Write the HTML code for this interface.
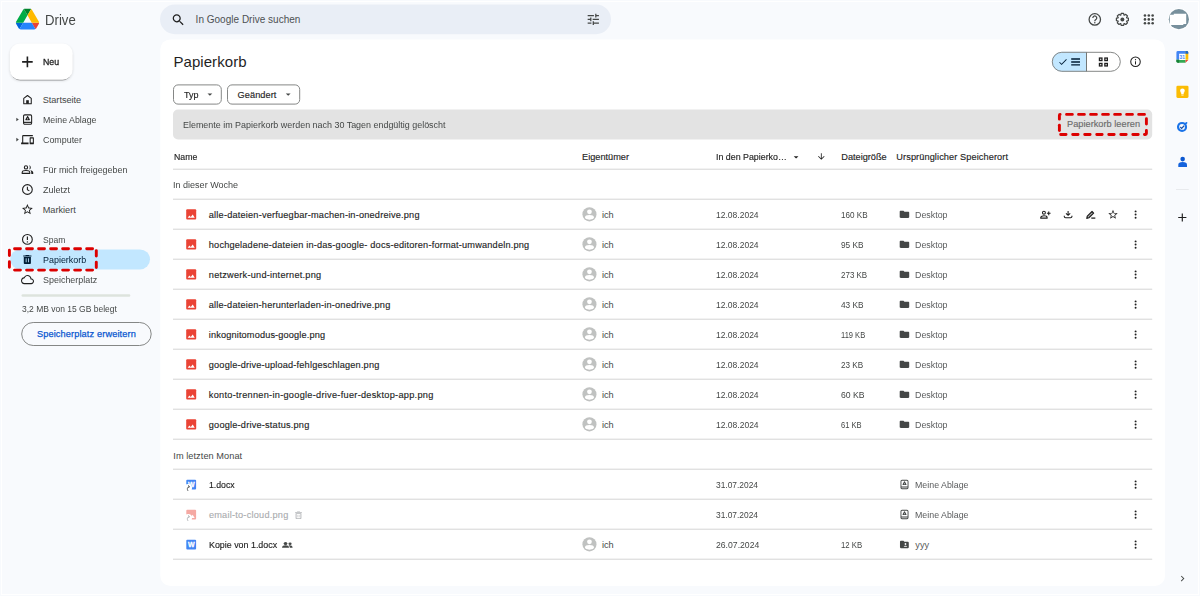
<!DOCTYPE html>
<html lang="de"><head><meta charset="utf-8"><title>Papierkorb – Google Drive</title>
<style>
html,body{margin:0;padding:0}
body{width:1200px;height:596px;overflow:hidden;background:#f8fafd;position:relative;font-family:"Liberation Sans", sans-serif;}
.t{position:absolute;white-space:nowrap;display:block}
.i{position:absolute;overflow:visible;display:block}
.b{position:absolute;box-sizing:border-box}
</style></head><body>
<svg class="i" style="left:0;top:0;width:1200px;height:596px" viewBox="0 0 1200 596">
<defs><filter id="sh" x="-20%" y="-20%" width="140%" height="150%"><feGaussianBlur stdDeviation="1.400"/></filter><filter id="sh2" x="-20%" y="-20%" width="140%" height="150%"><feGaussianBlur stdDeviation="0.500"/></filter></defs>
<rect x="1.500" y="1.500" width="1197.000" height="593.000" rx="0.000" fill="none" stroke="#ffffff" stroke-width="1.0"/>
<g transform="translate(15.900 8.700) scale(0.26575 0.26538) translate(-0 -0)">
<path d="m6.6 66.85 3.85 6.65c.8 1.4 1.95 2.5 3.3 3.3l13.75-23.8h-27.5c0 1.55.4 3.1 1.2 4.5z" fill="#0066da"/>
<path d="m43.65 25-13.75-23.8c-1.35.8-2.5 1.9-3.3 3.3l-25.4 44a9.06 9.06 0 0 0 -1.200 4.500h27.500z" fill="#00ac47"/>
<path d="m73.55 76.8c1.35-.8 2.5-1.9 3.3-3.300l1.600-2.750 7.650-13.250c.8-1.400 1.200-2.950 1.200-4.500h-27.502l5.852 11.500z" fill="#ea4335"/>
<path d="m43.65 25 13.750-23.800c-1.350-.8-2.900-1.200-4.500-1.200h-18.500c-1.600 0-3.150.45-4.500 1.200z" fill="#00832d"/>
<path d="m59.800 53h-32.300l-13.750 23.800c1.350.8 2.900 1.200 4.500 1.200h50.800c1.600 0 3.150-.45 4.500-1.200z" fill="#2684fc"/>
<path d="m73.400 26.500-12.700-22c-.8-1.400-1.950-2.500-3.300-3.300l-13.750 23.800 16.150 28h27.450c0-1.550-.4-3.100-1.200-4.500z" fill="#ffba00"/>
</g>
<rect x="160.000" y="4.400" width="451.000" height="29.800" rx="14.900" fill="#e9eef6"/>
<g transform="translate(170.800 12.400) scale(0.62500 0.62500) translate(-0 -0)"><path d="M15.5 14h-.79l-.28-.27C15.41 12.590 16 11.110 16 9.500 16 5.910 13.090 3 9.500 3S3 5.910 3 9.500 5.910 16 9.500 16c1.610 0 3.090-.590 4.230-1.570l.27.280v.790l5 4.990L20.490 19l-4.990-5zm-6 0C7.010 14 5 11.990 5 9.500S7.010 5 9.500 5 14 7.010 14 9.500 11.990 14 9.500 14z" fill="#1f1f1f"/></g>
<g transform="translate(585.800 11.800) scale(0.62500 0.62500) translate(-0 -0)"><path d="M3 17v2h6v-2H3zM3 5v2h10V5H3zm10 16v-2h8v-2h-8v-2h-2v6h2zM7 9v2H3v2h4v2h2V9H7zm14 4v-2H11v2h10zm-6-4h2V7h4V5h-4V3h-2v6z" fill="#444746"/></g>
<g transform="translate(1087.200 11.800) scale(0.63333 0.63333) translate(-0 -0)"><circle cx="12" cy="12" r="9" fill="none" stroke="#444746" stroke-width="2"/><path d="M8.9 9.700a3.100 3.100 0 1 1 4.800 2.600c-1 .7-1.700 1.300-1.700 2.700" fill="none" stroke="#444746" stroke-width="2"/><circle cx="12" cy="17.300" r="1.200" fill="#444746"/></g>
<g transform="translate(1115.200 12.200) scale(0.60000 0.60000) translate(-0 -0)"><path d="M22.00 9.97 L22.00 14.03 L19.11 14.68 L18.92 15.14 L20.50 17.64 L17.64 20.50 L15.14 18.92 L14.68 19.11 L14.03 22.00 L9.97 22.00 L9.32 19.11 L8.86 18.92 L6.36 20.50 L3.50 17.64 L5.08 15.14 L4.89 14.68 L2.00 14.03 L2.00 9.97 L4.89 9.32 L5.08 8.86 L3.50 6.36 L6.36 3.50 L8.86 5.08 L9.32 4.89 L9.97 2.00 L14.03 2.00 L14.68 4.89 L15.14 5.08 L17.64 3.50 L20.50 6.36 L18.92 8.86 L19.11 9.32Z" fill="none" stroke="#444746" stroke-width="2" stroke-linejoin="round"/><circle cx="12" cy="12" r="3.300" fill="#444746"/></g>
<g transform="translate(1141.100 11.700) scale(0.64167 0.64167) translate(-0 -0)"><circle cx="6" cy="6" r="2" fill="#444746"/><circle cx="6" cy="12" r="2" fill="#444746"/><circle cx="6" cy="18" r="2" fill="#444746"/><circle cx="12" cy="6" r="2" fill="#444746"/><circle cx="12" cy="12" r="2" fill="#444746"/><circle cx="12" cy="18" r="2" fill="#444746"/><circle cx="18" cy="6" r="2" fill="#444746"/><circle cx="18" cy="12" r="2" fill="#444746"/><circle cx="18" cy="18" r="2" fill="#444746"/></g>
<circle cx="1178.850" cy="19.200" r="10.900" fill="#ffffff"/><circle cx="1178.850" cy="19.200" r="10.100" fill="#78909c"/><path d="M1169.800 14.800H1173.800V13.800H1186.200V23.900H1183.300V24.900H1169.800z" fill="#ffffff"/>
<rect x="10.100" y="44.900" width="62.300" height="35.700" rx="10" fill="#000" opacity=".16" filter="url(#sh)"/><rect x="10.400" y="44.700" width="61.700" height="35.700" rx="10" fill="#000" opacity=".34" filter="url(#sh2)"/>
<rect x="9.800" y="43.500" width="62.900" height="36.200" rx="10.000" fill="#ffffff"/>
<g transform="translate(22.100 56.600) scale(1.00000 1.00000) translate(-0 -0)"><path d="M5.3 0v10.600M0 5.300h10.600" stroke="#1f1f1f" stroke-width="1.600"/></g>
<rect x="10.300" y="249.400" width="139.700" height="20.100" rx="10.050" fill="#c2e7ff"/>
<g transform="translate(16.300 117.700) scale(1.04167 0.90000) translate(-0 -0)"><path d="M0 0L2.400 2 0 4z" fill="#444746"/></g>
<g transform="translate(16.300 137.800) scale(1.04167 0.90000) translate(-0 -0)"><path d="M0 0L2.400 2 0 4z" fill="#444746"/></g>
<g transform="translate(21.850 93.850) scale(0.47083 0.47083) translate(-0 -0)"><path d="M4 21V9.500L12 3.500l8 6V21z" fill="none" stroke="#1f1f1f" stroke-width="2.200" stroke-linejoin="round"/><rect x="9.200" y="13.500" width="5.600" height="7.500" fill="#1f1f1f"/></g>
<g transform="translate(21.900 113.300) scale(0.47500 0.52083) translate(-0 -0)"><rect x="3.500" y="3" width="17" height="18" rx="2.500" fill="none" stroke="#1f1f1f" stroke-width="2.200"/><rect x="3.500" y="16.300" width="17" height="2.200" fill="#1f1f1f"/><path d="M12 6.300l3.600 5.900h-7.200z" fill="#1f1f1f" stroke="#1f1f1f" stroke-width="2.200" stroke-linejoin="round"/><circle cx="12" cy="10.600" r="1.100" fill="#f8fafd"/></g>
<g transform="translate(21.100 134.400) scale(0.53333 0.58333) translate(-0 -3)"><path d="M4 6h18V4H4c-1.100 0-2 .9-2 2v11H0v3h14v-3H4V6zm19 2h-6c-.550 0-1 .450-1 1v10c0 .550.450 1 1 1h6c.550 0 1-.450 1-1V9c0-.550-.450-1-1-1zm-1 9h-4v-7h4v7z" fill="#1f1f1f"/></g>
<g transform="translate(21.100 163.100) scale(0.54167 0.54167) translate(-0 -0)"><circle cx="9" cy="8" r="3" fill="none" stroke="#1f1f1f" stroke-width="2"/><path d="M2 19v-1.600c0-2.400 4.500-3.600 7-3.600s7 1.200 7 3.600V19z" fill="none" stroke="#1f1f1f" stroke-width="2" stroke-linejoin="round"/><path d="M14.800 4.100a4 4 0 0 1 0 7.800c1.700-2.300 1.700-5.500 0-7.800zM17 13.200c2.700.5 5.400 1.800 5.400 4.200V20h-3.600v-2.600c0-1.700-.7-3.100-1.800-4.200z" fill="#1f1f1f"/></g>
<g transform="translate(20.900 183.000) scale(0.54167 0.54167) translate(-0 -0)"><circle cx="12" cy="12" r="9" fill="none" stroke="#1f1f1f" stroke-width="2"/><path d="M12 7v5.300l3.600 2.200" fill="none" stroke="#1f1f1f" stroke-width="2"/></g>
<g transform="translate(20.900 202.900) scale(0.54167 0.54167) translate(-0 -0)"><path d="M22 9.240l-7.190-.620L12 2 9.190 8.630 2 9.240l5.460 4.730L5.820 21 12 17.270 18.180 21l-1.630-7.030L22 9.240zM12 15.400l-3.760 2.270 1-4.280-3.320-2.880 4.380-.380L12 6.100l1.710 4.040 4.380.380-3.320 2.880 1 4.280L12 15.400z" fill="#1f1f1f"/></g>
<g transform="translate(20.900 232.900) scale(0.54167 0.54167) translate(-0 -0)"><circle cx="12" cy="12" r="9" fill="none" stroke="#1f1f1f" stroke-width="2"/><path d="M12 6.800v6.400" stroke="#1f1f1f" stroke-width="2.200"/><circle cx="12" cy="16.600" r="1.300" fill="#1f1f1f"/></g>
<g transform="translate(20.240 253.600) scale(0.59167 0.49583) translate(-0 -0)"><path d="M6 19c0 1.100.9 2 2 2h8c1.100 0 2-.9 2-2V7H6v12zM19 4h-3.500l-1-1h-5l-1 1H5v2h14V4z" fill="#001d35"/><path d="M10 9.500v8M14 9.500v8" stroke="#c2e7ff" stroke-width="1.600"/></g>
<g transform="translate(21.000 273.800) scale(0.54167 0.57500) translate(-0 -2)"><path d="M19.350 10.040C18.670 6.590 15.640 4 12 4 9.110 4 6.600 5.640 5.350 8.040 2.340 8.360 0 10.910 0 14c0 3.310 2.690 6 6 6h13c2.760 0 5-2.240 5-5 0-2.640-2.050-4.780-4.650-4.960zM19 18H6c-2.210 0-4-1.790-4-4 0-2.050 1.530-3.760 3.560-3.970l1.070-.110.5-.950C8.080 7.140 9.940 6 12 6c2.620 0 4.880 1.860 5.390 4.430l.3 1.500 1.530.110c1.560.1 2.780 1.410 2.780 2.960 0 1.650-1.350 3-3 3z" fill="#1f1f1f"/></g>
<path d="M14.550 248.800H92.600" fill="none" stroke="#dc0000" stroke-width="2.900" stroke-linecap="round" stroke-dasharray="5.900 6.120"/><path d="M14.550 270.100H92.600" fill="none" stroke="#dc0000" stroke-width="2.900" stroke-linecap="round" stroke-dasharray="5.900 6.120"/><path d="M9.400 250.200V267.200" fill="none" stroke="#dc0000" stroke-width="2.900" stroke-linecap="round" stroke-dasharray="5.400 6.200"/><path d="M96.300 250.600V267.700" fill="none" stroke="#dc0000" stroke-width="2.900" stroke-linecap="round" stroke-dasharray="5.400 6.200"/>
<rect x="21.500" y="294.300" width="108.800" height="2.500" rx="1.300" fill="#dde3dd"/>
<rect x="21.700" y="322.500" width="129.500" height="23.000" rx="11.500" fill="none" stroke="#858786" stroke-width="1.0"/>
<rect x="160.300" y="39.400" width="1004.700" height="546.500" rx="10.000" fill="#ffffff"/>
<rect x="173.500" y="84.900" width="47.800" height="19.200" rx="4.500" fill="none" stroke="#858786" stroke-width="1.0"/>
<rect x="227.500" y="84.900" width="72.200" height="19.200" rx="4.500" fill="none" stroke="#858786" stroke-width="1.0"/>
<g transform="translate(204.150 88.650) scale(0.47917 0.47917) translate(-0 -0)"><path d="M7 10l5 5 5-5z" fill="#444746"/></g>
<g transform="translate(282.450 88.650) scale(0.47917 0.47917) translate(-0 -0)"><path d="M7 10l5 5 5-5z" fill="#444746"/></g>
<path d="M1086.500 51.800H1061.800a10 10 0 0 0 0 20H1086.500z" fill="#c2e7ff"/>
<rect x="1052.300" y="52.300" width="68.000" height="19.000" rx="9.500" fill="none" stroke="#858786" stroke-width="1.0"/>
<rect x="1086.000" y="52.300" width="1.000" height="19.000" rx="0.000" fill="#747775"/>
<g transform="translate(1057.700 56.700) scale(0.43333 0.43333) translate(-0 -0)"><path d="M9 16.170L4.830 12l-1.420 1.410L9 19 21 7l-1.410-1.410z" fill="#001d35"/></g>
<g transform="translate(1071.200 58.100) scale(1.00000 1.00000) translate(-0 -0)"><path d="M0 .9h8.800M0 3.850h8.800M0 6.800h8.800" stroke="#001d35" stroke-width="1.400"/></g>
<g transform="translate(1098.800 57.400) scale(1.00000 1.00000) translate(-0 -0)"><rect x="0.65" y="0.65" width="2.500" height="2.500" fill="none" stroke="#1f1f1f" stroke-width="1.300"/><rect x="0.65" y="6.05" width="2.500" height="2.500" fill="none" stroke="#1f1f1f" stroke-width="1.300"/><rect x="6.05" y="0.65" width="2.500" height="2.500" fill="none" stroke="#1f1f1f" stroke-width="1.300"/><rect x="6.05" y="6.05" width="2.500" height="2.500" fill="none" stroke="#1f1f1f" stroke-width="1.300"/></g>
<g transform="translate(1129.150 55.450) scale(0.52917 0.52917) translate(-0 -0)"><circle cx="12" cy="12" r="9" fill="none" stroke="#1f1f1f" stroke-width="2"/><path d="M12 11v6" stroke="#1f1f1f" stroke-width="2"/><circle cx="12" cy="8" r="1.200" fill="#1f1f1f"/></g>
<rect x="173.000" y="109.500" width="979.200" height="30.000" rx="5.000" fill="#e3e3e3"/>
<path d="M1066.550 114.400H1144.500" fill="none" stroke="#dc0000" stroke-width="2.900" stroke-linecap="round" stroke-dasharray="5.800 6.220"/><path d="M1146.400 118.800V124.100" fill="none" stroke="#dc0000" stroke-width="2.900" stroke-linecap="round" stroke-dasharray="9 9"/><path d="M1146.400 130.450V133.500Q1146.400 134.500 1145.400 134.500H1144.450" fill="none" stroke="#dc0000" stroke-width="2.900" stroke-linecap="round" stroke-dasharray="9 9"/><path d="M1060.650 134.500H1138.400" fill="none" stroke="#dc0000" stroke-width="2.900" stroke-linecap="round" stroke-dasharray="5.400 6.630"/><path d="M1059.400 125.250V130.550" fill="none" stroke="#dc0000" stroke-width="2.900" stroke-linecap="round" stroke-dasharray="9 9"/><path d="M1059.400 119.150V115.400Q1059.400 114.400 1060.100 114.400" fill="none" stroke="#dc0000" stroke-width="2.900" stroke-linecap="round" stroke-dasharray="9 9"/>
<g transform="translate(790.450 151.550) scale(0.47083 0.47083) translate(-0 -0)"><path d="M7 10l5 5 5-5z" fill="#1f1f1f"/></g>
<g transform="translate(816.400 151.600) scale(0.40833 0.40833) translate(-0 -0)"><path d="M20 12l-1.410-1.410L13 16.170V4h-2v12.170l-5.580-5.590L4 12l8 8 8-8z" fill="#1f1f1f"/></g>
<rect x="173.000" y="168.700" width="979.200" height="1.000" rx="0.000" fill="#d4d4d4"/>
<rect x="173.000" y="198.700" width="979.200" height="1.000" rx="0.000" fill="#d4d4d4"/>
<g transform="translate(186.200 209.300) scale(0.62500 0.63750) translate(-0 -0)"><rect x="0" y="0" width="16" height="16" rx="1.600" fill="#ea4335"/><path d="M2.300 13.400L5.100 9.700 7.300 12 10.400 8.200 13.700 13.400z" fill="#fff"/></g>
<g transform="translate(582.400 207.300) scale(1.00714 1.00714) translate(-0 -0)"><circle cx="7" cy="7" r="7" fill="#c0c2c1"/><circle cx="7" cy="4.500" r="2.350" fill="#fff"/><ellipse cx="7" cy="10.000" rx="4.400" ry="2.250" fill="#fff"/></g>
<g transform="translate(898.750 209.000) scale(0.47500 0.45000) translate(-0 -0)"><path d="M10 4H4c-1.100 0-1.990.9-1.990 2L2 18c0 1.100.9 2 2 2h16c1.100 0 2-.9 2-2V8c0-1.100-.9-2-2-2h-8l-2-2z" fill="#444746"/></g>
<g transform="translate(1129.850 208.750) scale(0.47917 0.47917) translate(-0 -0)"><circle cx="12" cy="5.500" r="2.050" fill="#1f1f1f"/><circle cx="12" cy="12.100" r="2.050" fill="#1f1f1f"/><circle cx="12" cy="18.700" r="2.050" fill="#1f1f1f"/></g>
<rect x="173.000" y="228.700" width="979.200" height="1.000" rx="0.000" fill="#d4d4d4"/>
<g transform="translate(186.200 239.300) scale(0.62500 0.63750) translate(-0 -0)"><rect x="0" y="0" width="16" height="16" rx="1.600" fill="#ea4335"/><path d="M2.300 13.400L5.100 9.700 7.300 12 10.400 8.200 13.700 13.400z" fill="#fff"/></g>
<g transform="translate(582.400 237.300) scale(1.00714 1.00714) translate(-0 -0)"><circle cx="7" cy="7" r="7" fill="#c0c2c1"/><circle cx="7" cy="4.500" r="2.350" fill="#fff"/><ellipse cx="7" cy="10.000" rx="4.400" ry="2.250" fill="#fff"/></g>
<g transform="translate(898.750 239.000) scale(0.47500 0.45000) translate(-0 -0)"><path d="M10 4H4c-1.100 0-1.990.9-1.990 2L2 18c0 1.100.9 2 2 2h16c1.100 0 2-.9 2-2V8c0-1.100-.9-2-2-2h-8l-2-2z" fill="#444746"/></g>
<g transform="translate(1129.850 238.750) scale(0.47917 0.47917) translate(-0 -0)"><circle cx="12" cy="5.500" r="2.050" fill="#1f1f1f"/><circle cx="12" cy="12.100" r="2.050" fill="#1f1f1f"/><circle cx="12" cy="18.700" r="2.050" fill="#1f1f1f"/></g>
<rect x="173.000" y="258.700" width="979.200" height="1.000" rx="0.000" fill="#d4d4d4"/>
<g transform="translate(186.200 269.300) scale(0.62500 0.63750) translate(-0 -0)"><rect x="0" y="0" width="16" height="16" rx="1.600" fill="#ea4335"/><path d="M2.300 13.400L5.100 9.700 7.300 12 10.400 8.200 13.700 13.400z" fill="#fff"/></g>
<g transform="translate(582.400 267.300) scale(1.00714 1.00714) translate(-0 -0)"><circle cx="7" cy="7" r="7" fill="#c0c2c1"/><circle cx="7" cy="4.500" r="2.350" fill="#fff"/><ellipse cx="7" cy="10.000" rx="4.400" ry="2.250" fill="#fff"/></g>
<g transform="translate(898.750 269.000) scale(0.47500 0.45000) translate(-0 -0)"><path d="M10 4H4c-1.100 0-1.990.9-1.990 2L2 18c0 1.100.9 2 2 2h16c1.100 0 2-.9 2-2V8c0-1.100-.9-2-2-2h-8l-2-2z" fill="#444746"/></g>
<g transform="translate(1129.850 268.750) scale(0.47917 0.47917) translate(-0 -0)"><circle cx="12" cy="5.500" r="2.050" fill="#1f1f1f"/><circle cx="12" cy="12.100" r="2.050" fill="#1f1f1f"/><circle cx="12" cy="18.700" r="2.050" fill="#1f1f1f"/></g>
<rect x="173.000" y="288.700" width="979.200" height="1.000" rx="0.000" fill="#d4d4d4"/>
<g transform="translate(186.200 299.300) scale(0.62500 0.63750) translate(-0 -0)"><rect x="0" y="0" width="16" height="16" rx="1.600" fill="#ea4335"/><path d="M2.300 13.400L5.100 9.700 7.300 12 10.400 8.200 13.700 13.400z" fill="#fff"/></g>
<g transform="translate(582.400 297.300) scale(1.00714 1.00714) translate(-0 -0)"><circle cx="7" cy="7" r="7" fill="#c0c2c1"/><circle cx="7" cy="4.500" r="2.350" fill="#fff"/><ellipse cx="7" cy="10.000" rx="4.400" ry="2.250" fill="#fff"/></g>
<g transform="translate(898.750 299.000) scale(0.47500 0.45000) translate(-0 -0)"><path d="M10 4H4c-1.100 0-1.990.9-1.990 2L2 18c0 1.100.9 2 2 2h16c1.100 0 2-.9 2-2V8c0-1.100-.9-2-2-2h-8l-2-2z" fill="#444746"/></g>
<g transform="translate(1129.850 298.750) scale(0.47917 0.47917) translate(-0 -0)"><circle cx="12" cy="5.500" r="2.050" fill="#1f1f1f"/><circle cx="12" cy="12.100" r="2.050" fill="#1f1f1f"/><circle cx="12" cy="18.700" r="2.050" fill="#1f1f1f"/></g>
<rect x="173.000" y="318.700" width="979.200" height="1.000" rx="0.000" fill="#d4d4d4"/>
<g transform="translate(186.200 329.300) scale(0.62500 0.63750) translate(-0 -0)"><rect x="0" y="0" width="16" height="16" rx="1.600" fill="#ea4335"/><path d="M2.300 13.400L5.100 9.700 7.300 12 10.400 8.200 13.700 13.400z" fill="#fff"/></g>
<g transform="translate(582.400 327.300) scale(1.00714 1.00714) translate(-0 -0)"><circle cx="7" cy="7" r="7" fill="#c0c2c1"/><circle cx="7" cy="4.500" r="2.350" fill="#fff"/><ellipse cx="7" cy="10.000" rx="4.400" ry="2.250" fill="#fff"/></g>
<g transform="translate(898.750 329.000) scale(0.47500 0.45000) translate(-0 -0)"><path d="M10 4H4c-1.100 0-1.990.9-1.990 2L2 18c0 1.100.9 2 2 2h16c1.100 0 2-.9 2-2V8c0-1.100-.9-2-2-2h-8l-2-2z" fill="#444746"/></g>
<g transform="translate(1129.850 328.750) scale(0.47917 0.47917) translate(-0 -0)"><circle cx="12" cy="5.500" r="2.050" fill="#1f1f1f"/><circle cx="12" cy="12.100" r="2.050" fill="#1f1f1f"/><circle cx="12" cy="18.700" r="2.050" fill="#1f1f1f"/></g>
<rect x="173.000" y="348.700" width="979.200" height="1.000" rx="0.000" fill="#d4d4d4"/>
<g transform="translate(186.200 359.300) scale(0.62500 0.63750) translate(-0 -0)"><rect x="0" y="0" width="16" height="16" rx="1.600" fill="#ea4335"/><path d="M2.300 13.400L5.100 9.700 7.300 12 10.400 8.200 13.700 13.400z" fill="#fff"/></g>
<g transform="translate(582.400 357.300) scale(1.00714 1.00714) translate(-0 -0)"><circle cx="7" cy="7" r="7" fill="#c0c2c1"/><circle cx="7" cy="4.500" r="2.350" fill="#fff"/><ellipse cx="7" cy="10.000" rx="4.400" ry="2.250" fill="#fff"/></g>
<g transform="translate(898.750 359.000) scale(0.47500 0.45000) translate(-0 -0)"><path d="M10 4H4c-1.100 0-1.990.9-1.990 2L2 18c0 1.100.9 2 2 2h16c1.100 0 2-.9 2-2V8c0-1.100-.9-2-2-2h-8l-2-2z" fill="#444746"/></g>
<g transform="translate(1129.850 358.750) scale(0.47917 0.47917) translate(-0 -0)"><circle cx="12" cy="5.500" r="2.050" fill="#1f1f1f"/><circle cx="12" cy="12.100" r="2.050" fill="#1f1f1f"/><circle cx="12" cy="18.700" r="2.050" fill="#1f1f1f"/></g>
<rect x="173.000" y="378.700" width="979.200" height="1.000" rx="0.000" fill="#d4d4d4"/>
<g transform="translate(186.200 389.300) scale(0.62500 0.63750) translate(-0 -0)"><rect x="0" y="0" width="16" height="16" rx="1.600" fill="#ea4335"/><path d="M2.300 13.400L5.100 9.700 7.300 12 10.400 8.200 13.700 13.400z" fill="#fff"/></g>
<g transform="translate(582.400 387.300) scale(1.00714 1.00714) translate(-0 -0)"><circle cx="7" cy="7" r="7" fill="#c0c2c1"/><circle cx="7" cy="4.500" r="2.350" fill="#fff"/><ellipse cx="7" cy="10.000" rx="4.400" ry="2.250" fill="#fff"/></g>
<g transform="translate(898.750 389.000) scale(0.47500 0.45000) translate(-0 -0)"><path d="M10 4H4c-1.100 0-1.990.9-1.990 2L2 18c0 1.100.9 2 2 2h16c1.100 0 2-.9 2-2V8c0-1.100-.9-2-2-2h-8l-2-2z" fill="#444746"/></g>
<g transform="translate(1129.850 388.750) scale(0.47917 0.47917) translate(-0 -0)"><circle cx="12" cy="5.500" r="2.050" fill="#1f1f1f"/><circle cx="12" cy="12.100" r="2.050" fill="#1f1f1f"/><circle cx="12" cy="18.700" r="2.050" fill="#1f1f1f"/></g>
<rect x="173.000" y="408.700" width="979.200" height="1.000" rx="0.000" fill="#d4d4d4"/>
<g transform="translate(186.200 419.300) scale(0.62500 0.63750) translate(-0 -0)"><rect x="0" y="0" width="16" height="16" rx="1.600" fill="#ea4335"/><path d="M2.300 13.400L5.100 9.700 7.300 12 10.400 8.200 13.700 13.400z" fill="#fff"/></g>
<g transform="translate(582.400 417.300) scale(1.00714 1.00714) translate(-0 -0)"><circle cx="7" cy="7" r="7" fill="#c0c2c1"/><circle cx="7" cy="4.500" r="2.350" fill="#fff"/><ellipse cx="7" cy="10.000" rx="4.400" ry="2.250" fill="#fff"/></g>
<g transform="translate(898.750 419.000) scale(0.47500 0.45000) translate(-0 -0)"><path d="M10 4H4c-1.100 0-1.990.9-1.990 2L2 18c0 1.100.9 2 2 2h16c1.100 0 2-.9 2-2V8c0-1.100-.9-2-2-2h-8l-2-2z" fill="#444746"/></g>
<g transform="translate(1129.850 418.750) scale(0.47917 0.47917) translate(-0 -0)"><circle cx="12" cy="5.500" r="2.050" fill="#1f1f1f"/><circle cx="12" cy="12.100" r="2.050" fill="#1f1f1f"/><circle cx="12" cy="18.700" r="2.050" fill="#1f1f1f"/></g>
<rect x="173.000" y="438.700" width="979.200" height="1.000" rx="0.000" fill="#d4d4d4"/>
<rect x="173.000" y="468.700" width="979.200" height="1.000" rx="0.000" fill="#d4d4d4"/>
<g transform="translate(186.300 479.700) scale(0.61250 0.61250) translate(-0 -0)"><rect x="0" y="0" width="16" height="16" rx="1.600" fill="#4285f4"/><text x="8" y="12.300" font-size="11.500" font-weight="700" fill="#fff" stroke="#fff" stroke-width=".45" text-anchor="middle" font-family="Liberation Sans,sans-serif">W</text><circle cx="3.100" cy="13.200" r="6.300" fill="#fff"/><path d="M2.800 18.300C1 15.500 1.400 12.200 4.600 11.200M2.900 9.300l2.300 1.800-1.500 2.300" fill="none" stroke="#3c4043" stroke-width="1.350"/></g>
<g transform="translate(899.500 478.900) scale(0.41667 0.46542) translate(-0 -0)"><rect x="3.500" y="3" width="17" height="18" rx="2.500" fill="none" stroke="#444746" stroke-width="2.200"/><rect x="3.500" y="16.300" width="17" height="2.200" fill="#444746"/><path d="M12 6.300l3.600 5.900h-7.200z" fill="#444746" stroke="#444746" stroke-width="2.200" stroke-linejoin="round"/><circle cx="12" cy="10.600" r="1.100" fill="#fff"/></g>
<g transform="translate(1129.850 478.750) scale(0.47917 0.47917) translate(-0 -0)"><circle cx="12" cy="5.500" r="2.050" fill="#1f1f1f"/><circle cx="12" cy="12.100" r="2.050" fill="#1f1f1f"/><circle cx="12" cy="18.700" r="2.050" fill="#1f1f1f"/></g>
<rect x="173.000" y="498.700" width="979.200" height="1.000" rx="0.000" fill="#d4d4d4"/>
<g transform="translate(186.300 509.700) scale(0.61250 0.61250) translate(-0 -0)"><g opacity=".45"><rect x="0" y="0" width="16" height="16" rx="1.600" fill="#ea4335"/><path d="M2.300 13.400L5.100 9.700 7.300 12 10.400 8.200 13.700 13.400z" fill="#fff"/></g><circle cx="3.100" cy="13.200" r="6.300" fill="#fff"/><path d="M2.800 18.300C1 15.500 1.400 12.200 4.600 11.200M2.900 9.300l2.300 1.800-1.500 2.300" fill="none" stroke="#a6a9ac" stroke-width="1.350"/></g>
<g transform="translate(292.700 510.250) scale(0.48333 0.41667) translate(-0 -0)"><path d="M6 19c0 1.100.9 2 2 2h8c1.100 0 2-.9 2-2V7H6v12zM8 9h8v10H8V9zm7.500-5l-1-1h-5l-1 1H5v2h14V4h-3.500z" fill="#b4b6b9"/><path d="M10.500 11v6M13.500 11v6" stroke="#b4b6b9" stroke-width="1.200"/></g>
<g transform="translate(899.500 508.900) scale(0.41667 0.46542) translate(-0 -0)"><rect x="3.500" y="3" width="17" height="18" rx="2.500" fill="none" stroke="#444746" stroke-width="2.200"/><rect x="3.500" y="16.300" width="17" height="2.200" fill="#444746"/><path d="M12 6.300l3.600 5.900h-7.200z" fill="#444746" stroke="#444746" stroke-width="2.200" stroke-linejoin="round"/><circle cx="12" cy="10.600" r="1.100" fill="#fff"/></g>
<g transform="translate(1129.850 508.750) scale(0.47917 0.47917) translate(-0 -0)"><circle cx="12" cy="5.500" r="2.050" fill="#1f1f1f"/><circle cx="12" cy="12.100" r="2.050" fill="#1f1f1f"/><circle cx="12" cy="18.700" r="2.050" fill="#1f1f1f"/></g>
<rect x="173.000" y="528.700" width="979.200" height="1.000" rx="0.000" fill="#d4d4d4"/>
<g transform="translate(186.300 539.700) scale(0.61250 0.61250) translate(-0 -0)"><rect x="0" y="0" width="16" height="16" rx="1.600" fill="#4285f4"/><text x="8" y="12.300" font-size="11.500" font-weight="700" fill="#fff" stroke="#fff" stroke-width=".45" text-anchor="middle" font-family="Liberation Sans,sans-serif">W</text></g>
<g transform="translate(282.000 541.800) scale(0.98148 0.80822) translate(-0 -0)"><circle cx="3.600" cy="2.200" r="1.900" fill="#444746"/><circle cx="8.200" cy="2.400" r="1.600" fill="#444746"/><path d="M0 7.300c0-2 1.700-3 3.600-3s3.600 1 3.600 3z" fill="#444746"/><path d="M8 7.300c0-1.300-.4-2.200-1.200-2.800 2-.5 4 .6 4 2.800z" fill="#444746"/></g>
<g transform="translate(582.400 537.300) scale(1.00714 1.00714) translate(-0 -0)"><circle cx="7" cy="7" r="7" fill="#c0c2c1"/><circle cx="7" cy="4.500" r="2.350" fill="#fff"/><ellipse cx="7" cy="10.000" rx="4.400" ry="2.250" fill="#fff"/></g>
<g transform="translate(899.100 538.900) scale(0.44000 0.46875) translate(-0 -0)"><path d="M10 4H4c-1.100 0-1.990.9-1.990 2L2 18c0 1.100.9 2 2 2h16c1.100 0 2-.9 2-2V8c0-1.100-.9-2-2-2h-8l-2-2z" fill="#444746"/><circle cx="14.500" cy="11" r="2" fill="#fff"/><path d="M10.500 17c0-1.800 2.600-2.600 4-2.600s4 .8 4 2.600z" fill="#fff"/></g>
<g transform="translate(1129.850 538.750) scale(0.47917 0.47917) translate(-0 -0)"><circle cx="12" cy="5.500" r="2.050" fill="#1f1f1f"/><circle cx="12" cy="12.100" r="2.050" fill="#1f1f1f"/><circle cx="12" cy="18.700" r="2.050" fill="#1f1f1f"/></g>
<rect x="173.000" y="558.700" width="979.200" height="1.000" rx="0.000" fill="#d4d4d4"/>
<g transform="translate(1039.800 209.200) scale(0.45833 0.45833) translate(-0 -0)"><circle cx="9" cy="7.500" r="3.200" fill="none" stroke="#1f1f1f" stroke-width="2.300"/><path d="M2 19.500v-1.400c0-2.500 4.400-3.700 7-3.700s7 1.200 7 3.700v1.400z" fill="none" stroke="#1f1f1f" stroke-width="2.300" stroke-linejoin="round"/><path d="M19.500 5v8M15.500 9h8" stroke="#1f1f1f" stroke-width="2.400"/></g>
<g transform="translate(1062.700 209.500) scale(0.45000 0.40833) translate(-0 -0)"><path d="M12 3.500v10.500M7.300 9.500l4.700 4.700 4.700-4.700" fill="none" stroke="#1f1f1f" stroke-width="2.400"/><path d="M3.500 15.500v1.500a3 3 0 0 0 3 3h11a3 3 0 0 0 3-3v-1.500" fill="none" stroke="#1f1f1f" stroke-width="2.400"/></g>
<g transform="translate(1085.200 209.100) scale(0.45000 0.45000) translate(-0 -0)"><path d="M3.500 20.500l1.200-4.700L15.200 5.300l3.500 3.500L8.200 19.300z" fill="#1f1f1f" fill-opacity=".35" stroke="#1f1f1f" stroke-width="2.600" stroke-linejoin="round"/><path d="M13.500 20h9" stroke="#1f1f1f" stroke-width="2.800"/></g>
<g transform="translate(1107.350 208.850) scale(0.47083 0.47083) translate(-0 -0)"><path d="M22 9.240l-7.190-.620L12 2 9.190 8.630 2 9.240l5.460 4.730L5.820 21 12 17.270 18.180 21l-1.630-7.030L22 9.240zM12 15.400l-3.760 2.270 1-4.280-3.320-2.880 4.380-.380L12 6.100l1.710 4.040 4.380.380-3.320 2.880 1 4.280L12 15.400z" fill="#1f1f1f"/></g>
<g transform="translate(1176.400 50.900) scale(0.49583 0.49583) translate(-0 -0)"><rect x="0" y="0" width="24" height="24" rx="3" fill="#fff"/>
<path d="M0 3a3 3 0 0 1 3-3h15v5.500H5.500V18H0z" fill="#4285f4"/>
<path d="M18 0h3a3 3 0 0 1 3 3v15h-5.500V5.500H18z" fill="#fbbc04"/>
<path d="M18 0h3a3 3 0 0 1 3 3v2.500h-6z" fill="#1967d2"/>
<path d="M0 18h5.500v.5H18.500V24H3a3 3 0 0 1-3-3z" fill="#34a853"/>
<path d="M0 18h5.500v6H3a3 3 0 0 1-3-3z" fill="#188038"/>
<path d="M18.500 18.500H24L18.500 24z" fill="#ea4335"/>
<text x="12" y="16" font-size="10" font-weight="700" fill="#4285f4" text-anchor="middle" font-family="Liberation Sans,sans-serif">31</text></g>
<g transform="translate(1176.400 85.800) scale(0.50417 0.50417) translate(-0 -0)"><rect width="24" height="24" rx="2.600" fill="#fbbc04"/><circle cx="12" cy="10" r="4.600" fill="#fff"/><rect x="9.500" y="13" width="5" height="3.600" fill="#fff"/><rect x="9.800" y="17.600" width="4.400" height="1.600" fill="#fff"/></g>
<g transform="translate(1176.000 120.600) scale(0.51667 0.51667) translate(-0 -0)"><circle cx="11.700" cy="12.300" r="7.700" fill="none" stroke="#1a73e8" stroke-width="4.200"/><path d="M17.500 7L20.300 4.500" stroke="#1a73e8" stroke-width="3.600" stroke-linecap="round"/><path d="M8.200 12.300l2.700 2.700 4.800-5" fill="none" stroke="#174ea6" stroke-width="2.300"/></g>
<circle cx="1182.650" cy="159.100" r="2.300" fill="#0b57d0"/><path d="M1178.300 167.000V164.800Q1178.300 162.100 1182.650 162.100T1187.000 164.800V167.000z" fill="#1563dc"/>
<rect x="1176.000" y="189.200" width="12.700" height="0.700" rx="0.000" fill="#e1e3e6"/>
<g transform="translate(1175.300 210.500) scale(0.58333 0.58333) translate(-0 -0)"><path d="M19 13h-6v6h-2v-6H5v-2h6V5h2v6h6v2z" fill="#1f1f1f"/></g>
<g transform="translate(1176.750 572.750) scale(0.47917 0.47917) translate(-0 -0)"><path d="M10 6L8.590 7.410 13.170 12l-4.580 4.590L10 18l6-6z" fill="#444746"/></g>
</svg>
<span id="drive" class="t" style="left:45.40px;top:11px;font-size:14.2px;line-height:18px;font-weight:400;color:#444746;transform:scaleX(0.9272);transform-origin:0 0;">Drive</span>
<span id="search" class="t" style="left:195.60px;top:13px;font-size:10px;line-height:13px;font-weight:400;color:#4d5052;letter-spacing:0.014px;">In Google Drive suchen</span>
<span id="neu" class="t" style="left:42.70px;top:56px;font-size:9.2px;line-height:12px;font-weight:400;color:#1f1f1f;transform:scaleX(0.9550);transform-origin:0 0;-webkit-text-stroke:0.3px currentColor;">Neu</span>
<span id="n1" class="t" style="left:42.70px;top:94px;font-size:9.2px;line-height:12px;font-weight:400;color:#444746;letter-spacing:-0.035px;">Startseite</span>
<span id="n2" class="t" style="left:42.70px;top:114px;font-size:9.2px;line-height:12px;font-weight:400;color:#444746;transform:scaleX(0.9607);transform-origin:0 0;">Meine Ablage</span>
<span id="n3" class="t" style="left:42.70px;top:134px;font-size:9.2px;line-height:12px;font-weight:400;color:#444746;transform:scaleX(0.9667);transform-origin:0 0;">Computer</span>
<span id="n4" class="t" style="left:42.70px;top:164px;font-size:9.2px;line-height:12px;font-weight:400;color:#444746;transform:scaleX(0.9732);transform-origin:0 0;">Für mich freigegeben</span>
<span id="n5" class="t" style="left:42.70px;top:184px;font-size:9.2px;line-height:12px;font-weight:400;color:#444746;transform:scaleX(0.9790);transform-origin:0 0;">Zuletzt</span>
<span id="n6" class="t" style="left:42.70px;top:204px;font-size:9.2px;line-height:12px;font-weight:400;color:#444746;letter-spacing:-0.012px;">Markiert</span>
<span id="n7" class="t" style="left:42.70px;top:234px;font-size:9.2px;line-height:12px;font-weight:400;color:#444746;transform:scaleX(0.9327);transform-origin:0 0;">Spam</span>
<span id="n8" class="t" style="left:42.70px;top:254px;font-size:9.2px;line-height:12px;font-weight:400;color:#001d35;transform:scaleX(0.9722);transform-origin:0 0;">Papierkorb</span>
<span id="n9" class="t" style="left:42.70px;top:274px;font-size:9.2px;line-height:12px;font-weight:400;color:#444746;transform:scaleX(0.9736);transform-origin:0 0;">Speicherplatz</span>
<span id="stor" class="t" style="left:21.50px;top:303px;font-size:9.2px;line-height:12px;font-weight:400;color:#444746;transform:scaleX(0.9244);transform-origin:0 0;">3,2 MB von 15 GB belegt</span>
<span id="sbtn" class="t" style="left:36.90px;top:328px;font-size:9.2px;line-height:12px;font-weight:400;color:#0b57d0;letter-spacing:0.131px;-webkit-text-stroke:0.25px currentColor;">Speicherplatz erweitern</span>
<span id="title" class="t" style="left:173.40px;top:52px;font-size:15px;line-height:19px;font-weight:400;color:#1f1f1f;letter-spacing:0.073px;">Papierkorb</span>
<span id="c1" class="t" style="left:184.30px;top:89px;font-size:9.2px;line-height:12px;font-weight:400;color:#1f1f1f;transform:scaleX(0.9789);transform-origin:0 0;-webkit-text-stroke:0.15px currentColor;">Typ</span>
<span id="c2" class="t" style="left:237.60px;top:89px;font-size:9.2px;line-height:12px;font-weight:400;color:#1f1f1f;letter-spacing:0.070px;-webkit-text-stroke:0.15px currentColor;">Geändert</span>
<span id="ban" class="t" style="left:183.20px;top:119px;font-size:9.2px;line-height:12px;font-weight:400;color:#444746;transform:scaleX(0.9722);transform-origin:0 0;">Elemente im Papierkorb werden nach 30 Tagen endgültig gelöscht</span>
<span id="leer" class="t" style="left:1067.00px;top:118px;font-size:9.2px;line-height:12px;font-weight:400;color:#6b6b6b;letter-spacing:0.029px;-webkit-text-stroke:0.15px currentColor;">Papierkorb leeren</span>
<span id="h1" class="t" style="left:173.90px;top:151px;font-size:9.2px;line-height:12px;font-weight:400;color:#1f1f1f;transform:scaleX(0.9504);transform-origin:0 0;-webkit-text-stroke:0.15px currentColor;">Name</span>
<span id="h2" class="t" style="left:582.00px;top:151px;font-size:9.2px;line-height:12px;font-weight:400;color:#1f1f1f;letter-spacing:0.002px;-webkit-text-stroke:0.15px currentColor;">Eigentümer</span>
<span id="h3" class="t" style="left:716.30px;top:151px;font-size:9.2px;line-height:12px;font-weight:400;color:#1f1f1f;transform:scaleX(0.9627);transform-origin:0 0;-webkit-text-stroke:0.15px currentColor;">In den Papierko…</span>
<span id="h4" class="t" style="left:841.30px;top:151px;font-size:9.2px;line-height:12px;font-weight:400;color:#1f1f1f;letter-spacing:-0.006px;-webkit-text-stroke:0.15px currentColor;">Dateigröße</span>
<span id="h5" class="t" style="left:896.30px;top:151px;font-size:9.2px;line-height:12px;font-weight:400;color:#1f1f1f;letter-spacing:0.097px;-webkit-text-stroke:0.15px currentColor;">Ursprünglicher Speicherort</span>
<span id="g1" class="t" style="left:173.40px;top:179px;font-size:9.2px;line-height:12px;font-weight:400;color:#444746;transform:scaleX(0.9829);transform-origin:0 0;">In dieser Woche</span>
<span id="r0n" class="t" style="left:208.80px;top:209px;font-size:9.2px;line-height:12px;font-weight:400;color:#1f1f1f;letter-spacing:0.195px;-webkit-text-stroke:0.15px currentColor;">alle-dateien-verfuegbar-machen-in-onedreive.png</span>
<span id="r0o" class="t" style="left:601.90px;top:209px;font-size:9.2px;line-height:12px;font-weight:400;color:#444746;letter-spacing:-0.025px;">ich</span>
<span id="r0d" class="t" style="left:715.90px;top:209px;font-size:9.2px;line-height:12px;font-weight:400;color:#444746;transform:scaleX(0.9264);transform-origin:0 0;">12.08.2024</span>
<span id="r0s" class="t" style="left:840.90px;top:209px;font-size:9.2px;line-height:12px;font-weight:400;color:#444746;transform:scaleX(0.8825);transform-origin:0 0;">160 KB</span>
<span id="r0l" class="t" style="left:915.30px;top:209px;font-size:9.2px;line-height:12px;font-weight:400;color:#595b5c;transform:scaleX(0.9639);transform-origin:0 0;">Desktop</span>
<span id="r1n" class="t" style="left:208.80px;top:239px;font-size:9.2px;line-height:12px;font-weight:400;color:#1f1f1f;letter-spacing:0.187px;-webkit-text-stroke:0.15px currentColor;">hochgeladene-dateien in-das-google- docs-editoren-format-umwandeln.png</span>
<span id="r1o" class="t" style="left:601.90px;top:239px;font-size:9.2px;line-height:12px;font-weight:400;color:#444746;letter-spacing:-0.025px;">ich</span>
<span id="r1d" class="t" style="left:715.90px;top:239px;font-size:9.2px;line-height:12px;font-weight:400;color:#444746;transform:scaleX(0.9264);transform-origin:0 0;">12.08.2024</span>
<span id="r1s" class="t" style="left:841.40px;top:239px;font-size:9.2px;line-height:12px;font-weight:400;color:#444746;transform:scaleX(0.9029);transform-origin:0 0;">95 KB</span>
<span id="r1l" class="t" style="left:915.30px;top:239px;font-size:9.2px;line-height:12px;font-weight:400;color:#595b5c;transform:scaleX(0.9639);transform-origin:0 0;">Desktop</span>
<span id="r2n" class="t" style="left:208.80px;top:269px;font-size:9.2px;line-height:12px;font-weight:400;color:#1f1f1f;letter-spacing:0.231px;-webkit-text-stroke:0.15px currentColor;">netzwerk-und-internet.png</span>
<span id="r2o" class="t" style="left:601.90px;top:269px;font-size:9.2px;line-height:12px;font-weight:400;color:#444746;letter-spacing:-0.025px;">ich</span>
<span id="r2d" class="t" style="left:715.90px;top:269px;font-size:9.2px;line-height:12px;font-weight:400;color:#444746;transform:scaleX(0.9264);transform-origin:0 0;">12.08.2024</span>
<span id="r2s" class="t" style="left:841.40px;top:269px;font-size:9.2px;line-height:12px;font-weight:400;color:#444746;transform:scaleX(0.8693);transform-origin:0 0;">273 KB</span>
<span id="r2l" class="t" style="left:915.30px;top:269px;font-size:9.2px;line-height:12px;font-weight:400;color:#595b5c;transform:scaleX(0.9639);transform-origin:0 0;">Desktop</span>
<span id="r3n" class="t" style="left:208.80px;top:299px;font-size:9.2px;line-height:12px;font-weight:400;color:#1f1f1f;letter-spacing:0.191px;-webkit-text-stroke:0.15px currentColor;">alle-dateien-herunterladen-in-onedrive.png</span>
<span id="r3o" class="t" style="left:601.90px;top:299px;font-size:9.2px;line-height:12px;font-weight:400;color:#444746;letter-spacing:-0.025px;">ich</span>
<span id="r3d" class="t" style="left:715.90px;top:299px;font-size:9.2px;line-height:12px;font-weight:400;color:#444746;transform:scaleX(0.9264);transform-origin:0 0;">12.08.2024</span>
<span id="r3s" class="t" style="left:841.40px;top:299px;font-size:9.2px;line-height:12px;font-weight:400;color:#444746;transform:scaleX(0.9029);transform-origin:0 0;">43 KB</span>
<span id="r3l" class="t" style="left:915.30px;top:299px;font-size:9.2px;line-height:12px;font-weight:400;color:#595b5c;transform:scaleX(0.9639);transform-origin:0 0;">Desktop</span>
<span id="r4n" class="t" style="left:208.80px;top:329px;font-size:9.2px;line-height:12px;font-weight:400;color:#1f1f1f;letter-spacing:0.140px;-webkit-text-stroke:0.15px currentColor;">inkognitomodus-google.png</span>
<span id="r4o" class="t" style="left:601.90px;top:329px;font-size:9.2px;line-height:12px;font-weight:400;color:#444746;letter-spacing:-0.025px;">ich</span>
<span id="r4d" class="t" style="left:715.90px;top:329px;font-size:9.2px;line-height:12px;font-weight:400;color:#444746;transform:scaleX(0.9264);transform-origin:0 0;">12.08.2024</span>
<span id="r4s" class="t" style="left:840.90px;top:329px;font-size:9.2px;line-height:12px;font-weight:400;color:#444746;transform:scaleX(0.8212);transform-origin:0 0;">119 KB</span>
<span id="r4l" class="t" style="left:915.30px;top:329px;font-size:9.2px;line-height:12px;font-weight:400;color:#595b5c;transform:scaleX(0.9639);transform-origin:0 0;">Desktop</span>
<span id="r5n" class="t" style="left:208.80px;top:359px;font-size:9.2px;line-height:12px;font-weight:400;color:#1f1f1f;letter-spacing:0.177px;-webkit-text-stroke:0.15px currentColor;">google-drive-upload-fehlgeschlagen.png</span>
<span id="r5o" class="t" style="left:601.90px;top:359px;font-size:9.2px;line-height:12px;font-weight:400;color:#444746;letter-spacing:-0.025px;">ich</span>
<span id="r5d" class="t" style="left:715.90px;top:359px;font-size:9.2px;line-height:12px;font-weight:400;color:#444746;transform:scaleX(0.9264);transform-origin:0 0;">12.08.2024</span>
<span id="r5s" class="t" style="left:841.40px;top:359px;font-size:9.2px;line-height:12px;font-weight:400;color:#444746;transform:scaleX(0.8869);transform-origin:0 0;">23 KB</span>
<span id="r5l" class="t" style="left:915.30px;top:359px;font-size:9.2px;line-height:12px;font-weight:400;color:#595b5c;transform:scaleX(0.9639);transform-origin:0 0;">Desktop</span>
<span id="r6n" class="t" style="left:208.80px;top:389px;font-size:9.2px;line-height:12px;font-weight:400;color:#1f1f1f;letter-spacing:0.277px;-webkit-text-stroke:0.15px currentColor;">konto-trennen-in-google-drive-fuer-desktop-app.png</span>
<span id="r6o" class="t" style="left:601.90px;top:389px;font-size:9.2px;line-height:12px;font-weight:400;color:#444746;letter-spacing:-0.025px;">ich</span>
<span id="r6d" class="t" style="left:715.90px;top:389px;font-size:9.2px;line-height:12px;font-weight:400;color:#444746;transform:scaleX(0.9264);transform-origin:0 0;">12.08.2024</span>
<span id="r6s" class="t" style="left:841.40px;top:389px;font-size:9.2px;line-height:12px;font-weight:400;color:#444746;transform:scaleX(0.9428);transform-origin:0 0;">60 KB</span>
<span id="r6l" class="t" style="left:915.30px;top:389px;font-size:9.2px;line-height:12px;font-weight:400;color:#595b5c;transform:scaleX(0.9639);transform-origin:0 0;">Desktop</span>
<span id="r7n" class="t" style="left:208.80px;top:419px;font-size:9.2px;line-height:12px;font-weight:400;color:#1f1f1f;letter-spacing:0.203px;-webkit-text-stroke:0.15px currentColor;">google-drive-status.png</span>
<span id="r7o" class="t" style="left:601.90px;top:419px;font-size:9.2px;line-height:12px;font-weight:400;color:#444746;letter-spacing:-0.025px;">ich</span>
<span id="r7d" class="t" style="left:715.90px;top:419px;font-size:9.2px;line-height:12px;font-weight:400;color:#444746;transform:scaleX(0.9264);transform-origin:0 0;">12.08.2024</span>
<span id="r7s" class="t" style="left:841.40px;top:419px;font-size:9.2px;line-height:12px;font-weight:400;color:#444746;transform:scaleX(0.8230);transform-origin:0 0;">61 KB</span>
<span id="r7l" class="t" style="left:915.30px;top:419px;font-size:9.2px;line-height:12px;font-weight:400;color:#595b5c;transform:scaleX(0.9639);transform-origin:0 0;">Desktop</span>
<span id="g2" class="t" style="left:173.30px;top:450px;font-size:9.2px;line-height:12px;font-weight:400;color:#444746;letter-spacing:0.059px;">Im letzten Monat</span>
<span id="r8n" class="t" style="left:208.90px;top:479px;font-size:9.2px;line-height:12px;font-weight:400;color:#1f1f1f;transform:scaleX(0.9491);transform-origin:0 0;-webkit-text-stroke:0.15px currentColor;">1.docx</span>
<span id="r8d" class="t" style="left:716.30px;top:479px;font-size:9.2px;line-height:12px;font-weight:400;color:#444746;transform:scaleX(0.9134);transform-origin:0 0;">31.07.2024</span>
<span id="r8l" class="t" style="left:915.30px;top:479px;font-size:9.2px;line-height:12px;font-weight:400;color:#595b5c;transform:scaleX(0.9607);transform-origin:0 0;">Meine Ablage</span>
<span id="r9n" class="t" style="left:208.90px;top:509px;font-size:9.2px;line-height:12px;font-weight:400;color:#a9abae;letter-spacing:0.224px;-webkit-text-stroke:0.12px currentColor;">email-to-cloud.png</span>
<span id="r9d" class="t" style="left:716.30px;top:509px;font-size:9.2px;line-height:12px;font-weight:400;color:#444746;transform:scaleX(0.9134);transform-origin:0 0;">31.07.2024</span>
<span id="r9l" class="t" style="left:915.30px;top:509px;font-size:9.2px;line-height:12px;font-weight:400;color:#595b5c;transform:scaleX(0.9607);transform-origin:0 0;">Meine Ablage</span>
<span id="r10n" class="t" style="left:208.90px;top:539px;font-size:9.2px;line-height:12px;font-weight:400;color:#1f1f1f;transform:scaleX(0.9660);transform-origin:0 0;-webkit-text-stroke:0.15px currentColor;">Kopie von 1.docx</span>
<span id="r10o" class="t" style="left:601.90px;top:539px;font-size:9.2px;line-height:12px;font-weight:400;color:#444746;letter-spacing:-0.025px;">ich</span>
<span id="r10d" class="t" style="left:716.30px;top:539px;font-size:9.2px;line-height:12px;font-weight:400;color:#444746;transform:scaleX(0.9416);transform-origin:0 0;">26.07.2024</span>
<span id="r10s" class="t" style="left:840.90px;top:539px;font-size:9.2px;line-height:12px;font-weight:400;color:#444746;transform:scaleX(0.8469);transform-origin:0 0;">12 KB</span>
<span id="r10l" class="t" style="left:915.30px;top:539px;font-size:9.2px;line-height:12px;font-weight:400;color:#595b5c;letter-spacing:0.009px;">yyy</span>
</body></html>
